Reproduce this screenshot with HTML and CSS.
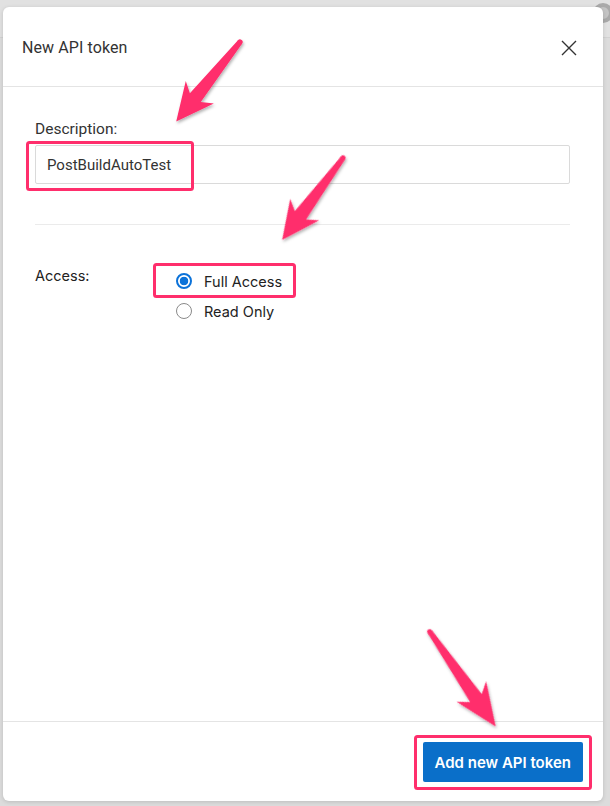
FILE: index.html
```html
<!DOCTYPE html>
<html lang="en">
<head>
    <meta charset="UTF-8">
    <meta name="viewport" content="width=device-width, initial-scale=1.0">
    <title>New API token</title>
    <link rel="stylesheet" href="styles.css">
</head>
<body>
    <div class="page">
        <div class="avatar"></div>
        <div class="dialog">
            <div class="dialog-header">
                <h2>New API token</h2>
                <button type="button" class="close" aria-label="Close">
                    <svg width="16" height="16" viewBox="0 0 16 16">
                        <path d="M1 1 L15 15 M15 1 L1 15" stroke="#333" stroke-width="1.4" fill="none"/>
                    </svg>
                </button>
            </div>
            <form class="dialog-body">
                <label for="description" class="field-label">Description:</label>
                <input type="text" id="description" value="PostBuildAutoTest">

                <hr class="divider">

                <div class="access-row">
                    <span class="access-label">Access:</span>
                    <div class="radio-group">
                        <label class="radio">
                            <input type="radio" name="access" value="full" checked>
                            <span>Full Access</span>
                        </label>
                        <label class="radio">
                            <input type="radio" name="access" value="read">
                            <span>Read Only</span>
                        </label>
                    </div>
                </div>
            </form>
            <div class="dialog-footer">
                <button type="submit" class="primary">Add new API token</button>
            </div>
        </div>

        <!-- annotation layer: highlight boxes and arrows -->
        <svg class="annotations" width="610" height="806" viewBox="0 0 610 806">
            <defs>
                <filter id="shadow" x="-20%" y="-20%" width="140%" height="140%">
                    <feDropShadow dx="1" dy="2" stdDeviation="1.5" flood-color="#000" flood-opacity="0.3"/>
                </filter>
                <g id="arrow">
                    <circle cx="0" cy="0" r="2.6"/>
                    <polygon points="0,-2.6 70,-7 63,-18 100,0 63,18 70,7 0,2.6"/>
                </g>
            </defs>
            <g fill="none" stroke="#ff2e6c" stroke-width="3">
                <rect x="27.5" y="142.5" width="165" height="47" rx="2"/>
                <rect x="154.5" y="264.5" width="140" height="32" rx="2"/>
                <rect x="415.5" y="736.5" width="175" height="52" rx="2"/>
            </g>
            <g fill="#ff2e6c" filter="url(#shadow)">
                <use href="#arrow" transform="translate(240 42) rotate(128.7) scale(1.02 1)"/>
                <use href="#arrow" transform="translate(343 158) rotate(126.6) scale(1.02 1)"/>
                <use href="#arrow" transform="translate(430 632) rotate(55.2) scale(1.15 1)"/>
            </g>
        </svg>
    </div>
</body>
</html>
```

FILE: styles.css
```css
* {
    box-sizing: border-box;
}
body {
    margin: 0;
    font-family: 'Roboto', 'Liberation Sans', sans-serif;
    background: linear-gradient(to bottom, #e1e1e1 0, #e1e1e1 37px, #d2d2d2 37px, #d2d2d2 38px, #dcdcdc 38px);
}
.page {
    position: relative;
    width: 610px;
    height: 806px;
    padding: 7px 7px 5px 3px;
    overflow: hidden;
}
.avatar {
    position: absolute;
    top: 3px;
    right: -3px;
    width: 20px;
    height: 20px;
    border-radius: 50%;
    border: 4px solid #a9a9a9;
    background: #c4c4c4;
}
.dialog {
    position: relative;
    height: 794px;
    background: #fff;
    border-radius: 6px;
    box-shadow: 0 1px 4px rgba(0, 0, 0, 0.15);
    display: flex;
    flex-direction: column;
}
.dialog-header {
    height: 80px;
    padding: 2px 26px 0 19px;
    display: flex;
    align-items: center;
    justify-content: space-between;
    border-bottom: 1px solid #e4e4e4;
}
.dialog-header h2 {
    margin: 0;
    font-size: 16px;
    font-weight: 400;
    color: #333;
    letter-spacing: 0.1px;
}
.close {
    border: none;
    background: none;
    padding: 0;
    width: 16px;
    height: 16px;
    cursor: pointer;
}
.dialog-body {
    flex: 1;
    padding: 33px 33px 0 32px;
    display: flex;
    flex-direction: column;
}
.field-label {
    font-size: 15.5px;
    color: #333;
    line-height: 18px;
}
#description {
    margin-top: 7px;
    height: 39px;
    padding: 0 11px;
    border: 1px solid #dadada;
    border-radius: 2px;
    font-family: 'Roboto', 'Liberation Sans', sans-serif;
    font-size: 15px;
    color: #333;
}
.divider {
    margin: 40px 0 0;
    border: none;
    border-top: 1px solid #ebebeb;
}
.access-row {
    margin-top: 41px;
    display: flex;
    font-family: 'Inter', 'Liberation Sans', sans-serif;
    font-size: 14.5px;
    color: #222;
}
.access-label {
    width: 141px;
    padding-top: 2px;
    line-height: 16px;
}
.radio-group {
    display: flex;
    flex-direction: column;
}
.radio {
    height: 30px;
    display: flex;
    align-items: center;
    gap: 12px;
    cursor: pointer;
}
.radio input {
    appearance: none;
    -webkit-appearance: none;
    margin: 0;
    width: 16px;
    height: 16px;
    border-radius: 50%;
    border: 1px solid #8a8a8a;
    background: #fff;
}
.radio input:checked {
    border: 2px solid #0b72d9;
    background: radial-gradient(circle, #0b72d9 0, #0b72d9 4px, #fff 4.6px);
}
.dialog-footer {
    padding: 20px 20px 19px;
    border-top: 1px solid #e4e4e4;
    display: flex;
    justify-content: flex-end;
}
.primary {
    height: 40px;
    padding: 0 12px;
    border: none;
    border-radius: 2px;
    background-color: #0a6fc9;
    color: #fff;
    font-family: 'Inter', 'Liberation Sans', sans-serif;
    font-size: 15px;
    font-weight: 600;
    cursor: pointer;
}
.annotations {
    position: absolute;
    top: 0;
    left: 0;
    pointer-events: none;
}
```
